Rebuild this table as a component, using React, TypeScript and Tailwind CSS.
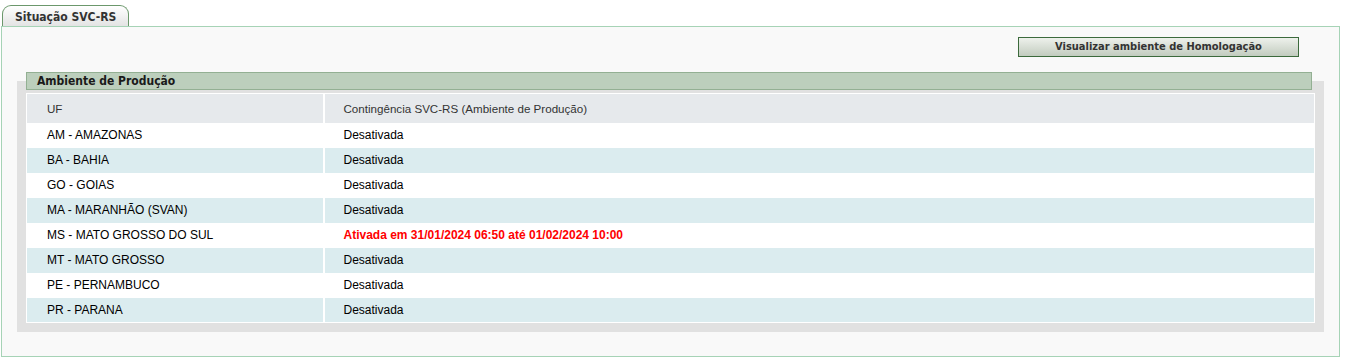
const rows: { uf: string; status: string; active?: boolean }[] = [
  { uf: "AM - AMAZONAS", status: "Desativada" },
  { uf: "BA - BAHIA", status: "Desativada" },
  { uf: "GO - GOIAS", status: "Desativada" },
  { uf: "MA - MARANHÃO (SVAN)", status: "Desativada" },
  { uf: "MS - MATO GROSSO DO SUL", status: "Ativada em 31/01/2024 06:50 até 01/02/2024 10:00", active: true },
  { uf: "MT - MATO GROSSO", status: "Desativada" },
  { uf: "PE - PERNAMBUCO", status: "Desativada" },
  { uf: "PR - PARANA", status: "Desativada" },
];

const verdana = "font-['DejaVu_Sans_Condensed','DejaVu_Sans',sans-serif]";

export default function App() {
  return (
    <div className="h-[363px] w-[1356px] bg-white pt-[5px]">
      <div
        className={`ml-[2px] flex h-[22px] w-[127px] items-center rounded-t-[9px] border border-b-0 border-[#6b976b] bg-gradient-to-b from-white to-[#e2e2e2] pl-[12px] text-[12px] font-bold text-[#333] ${verdana}`}
      >
        Situação SVC-RS
      </div>
      <section className="ml-[1px] -mt-px h-[331px] w-[1339px] border border-[#a6d3b6] bg-[#f9f9f9]">
        <div className="flex justify-end pr-[40px] pt-[10px]">
          <button
            className={`h-[20px] w-[281px] border border-[#3c6a3c] bg-gradient-to-b from-[#eef1ec] to-[#c2ccbf] text-[11px] font-bold text-[#333] ${verdana}`}
          >
            Visualizar ambiente de Homologação
          </button>
        </div>

        <div className="ml-[15px] mt-[15px] w-[1307px]">
          <h2
            className={`relative z-10 ml-[9px] flex h-[18px] w-[1286px] items-center border border-[#93b093] bg-[#bccfbc] pl-[10px] text-[12px] font-bold text-[#1a1a1a] ${verdana}`}
          >
            Ambiente de Produção
          </h2>
          <div className="-mt-[9px] bg-[#e1e1e1] pb-[9px] pl-[9px] pt-[12px]">
            <table className="w-[1289px] border-collapse border border-white font-['Liberation_Sans',Arial,sans-serif]">
              <thead>
                <tr className="h-[29px] bg-[#e6e9ec] text-left text-[11.6px] text-[#333]">
                  <th className="w-[297px] border-r-2 border-white pl-[20px] font-normal">UF</th>
                  <th className="pl-[19px] font-normal">Contingência SVC-RS (Ambiente de Produção)</th>
                </tr>
              </thead>
              <tbody>
                {rows.map((r, i) => (
                  <tr key={r.uf} className={`h-[25px] text-[12px] ${i % 2 ? "bg-[#dbecef]" : "bg-white"}`}>
                    <td className="border-r-2 border-white pl-[20px] text-black">{r.uf}</td>
                    <td className={`pl-[19px] ${r.active ? "font-bold text-[#ff0000]" : "text-black"}`}>{r.status}</td>
                  </tr>
                ))}
              </tbody>
            </table>
          </div>
        </div>
      </section>
    </div>
  );
}
